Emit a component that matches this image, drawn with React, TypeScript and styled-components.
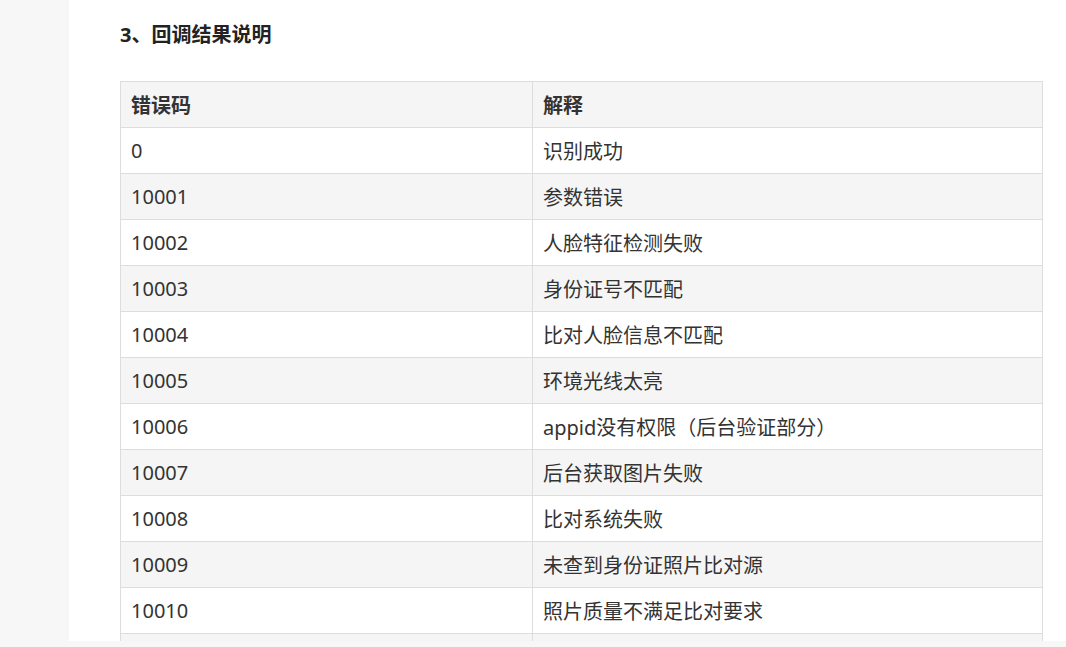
import styled, { createGlobalStyle } from "styled-components";

interface IErrorRow {
  code: string;
  desc: string;
}

const rows: IErrorRow[] = [
  { code: "0", desc: "识别成功" },
  { code: "10001", desc: "参数错误" },
  { code: "10002", desc: "人脸特征检测失败" },
  { code: "10003", desc: "身份证号不匹配" },
  { code: "10004", desc: "比对人脸信息不匹配" },
  { code: "10005", desc: "环境光线太亮" },
  { code: "10006", desc: "appid没有权限（后台验证部分）" },
  { code: "10007", desc: "后台获取图片失败" },
  { code: "10008", desc: "比对系统失败" },
  { code: "10009", desc: "未查到身份证照片比对源" },
  { code: "10010", desc: "照片质量不满足比对要求" },
  // next row only peeks in at the bottom edge, its text is below the fold
  { code: "", desc: "" },
];

const GlobalStyle = createGlobalStyle`
  html, body {
    margin: 0;
    padding: 0;
    background: #f7f7f7;
    overflow: hidden;
  }
  body {
    font-family: "Noto Sans", "Noto Sans CJK SC", sans-serif;
    color: #333;
  }
`;

const Page = styled.div`
  display: flex;
  height: 647px;
`;

const SideGutter = styled.div`
  width: 69px;
  flex-shrink: 0;
  background: #f7f7f7;
`;

const Content = styled.main`
  flex: 1;
  height: 641px;
  overflow: hidden;
  background: #fff;
  padding: 22px 23px 0 51px;
  box-sizing: border-box;
`;

const Heading = styled.h3`
  margin: 0 0 33px;
  font-size: 20px;
  line-height: 26px;
  font-weight: 700;
  color: #222;
`;

const Table = styled.table`
  width: 923px;
  border-collapse: collapse;
  font-size: 20px;
  color: #333;
  th, td {
    height: 45px;
    padding: 0 10px;
    border: 1px solid #ddd;
    text-align: left;
    vertical-align: middle;
    white-space: nowrap;
  }
  th {
    font-weight: 700;
    background: #f5f5f5;
  }
  col:first-child {
    width: 412px;
  }
`;

const Row = styled.tr<{ $striped: boolean }>`
  background: ${(props) => (props.$striped ? "#f5f5f5" : "#fff")};
`;

function App() {
  return (
    <>
      <GlobalStyle />
      <Page>
        <SideGutter />
        <Content>
          <Heading>3、回调结果说明</Heading>
          <Table>
            <colgroup>
              <col />
              <col />
            </colgroup>
            <thead>
              <tr>
                <th>错误码</th>
                <th>解释</th>
              </tr>
            </thead>
            <tbody>
              {rows.map((row, i) => (
                <Row key={i} $striped={i % 2 === 1}>
                  <td>{row.code}</td>
                  <td>{row.desc}</td>
                </Row>
              ))}
            </tbody>
          </Table>
        </Content>
      </Page>
    </>
  );
}

export default App;
